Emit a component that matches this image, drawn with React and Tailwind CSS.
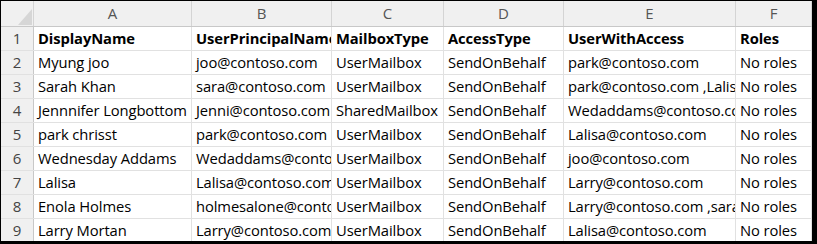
import React from "react";

const cols = ["A", "B", "C", "D", "E", "F"];
const widths = ["w-[158px]", "w-[140px]", "w-[112px]", "w-[120px]", "w-[172px]", "w-[76px]"];

const rows = [
  ["DisplayName", "UserPrincipalName", "MailboxType", "AccessType", "UserWithAccess", "Roles"],
  ["Myung joo", "joo@contoso.com", "UserMailbox", "SendOnBehalf", "park@contoso.com", "No roles"],
  ["Sarah Khan", "sara@contoso.com", "UserMailbox", "SendOnBehalf", "park@contoso.com ,Lalisa@contoso.com", "No roles"],
  ["Jennnifer Longbottom", "Jenni@contoso.com", "SharedMailbox", "SendOnBehalf", "Wedaddams@contoso.com", "No roles"],
  ["park chrisst", "park@contoso.com", "UserMailbox", "SendOnBehalf", "Lalisa@contoso.com", "No roles"],
  ["Wednesday Addams", "Wedaddams@contoso.com", "UserMailbox", "SendOnBehalf", "joo@contoso.com", "No roles"],
  ["Lalisa", "Lalisa@contoso.com", "UserMailbox", "SendOnBehalf", "Larry@contoso.com", "No roles"],
  ["Enola Holmes", "holmesalone@contoso.com", "UserMailbox", "SendOnBehalf", "Larry@contoso.com ,sara@contoso.com", "No roles"],
  ["Larry Mortan", "Larry@contoso.com", "UserMailbox", "SendOnBehalf", "Lalisa@contoso.com", "No roles"],
];

export default function App() {
  return (
    <div className="w-[817px] h-[244px] bg-black pt-[1px] pl-[1px] pr-[5px] pb-[3px] overflow-hidden">
      <div
        className="w-[811px] h-[240px] bg-white overflow-hidden"
        style={{ fontFamily: '"Open Sans", "Noto Sans", sans-serif' }}
      >
        {/* header row */}
        <div className="flex h-[26px] bg-[#f0f0f0] border-b border-[#c8c8c8]">
          <div className="w-[33px] shrink-0 relative border-r border-[#d4d4d4]">
            <svg className="absolute left-[17px] top-[8px]" width="14" height="16" viewBox="0 0 14 16">
              <polygon points="14,0 14,16 0,16" fill="#d6d6d6" />
            </svg>
          </div>
          {cols.map((c, i) => (
            <div
              key={c}
              className={`${widths[i]} shrink-0 flex items-center justify-center text-[15px] text-[#555] border-r border-[#d4d4d4]`}
            >
              {c}
            </div>
          ))}
        </div>
        {rows.map((r, ri) => (
          <div key={ri} className="flex h-[24px] border-b border-[#e1e1e1]">
            <div className="w-[33px] shrink-0 bg-[#f0f0f0] border-r border-[#c8c8c8] flex items-center justify-center text-[15px] text-[#444]">
              {ri + 1}
            </div>
            {r.map((v, ci) => (
              <div
                key={ci}
                className={`${widths[ci]} shrink-0 overflow-hidden whitespace-nowrap flex items-center pl-[4px] text-[14.75px] tracking-[-0.1px] text-black border-r border-[#e1e1e1] ${ri === 0 ? "font-bold" : ""}`}
              >
                {v}
              </div>
            ))}
          </div>
        ))}
      </div>
    </div>
  );
}
